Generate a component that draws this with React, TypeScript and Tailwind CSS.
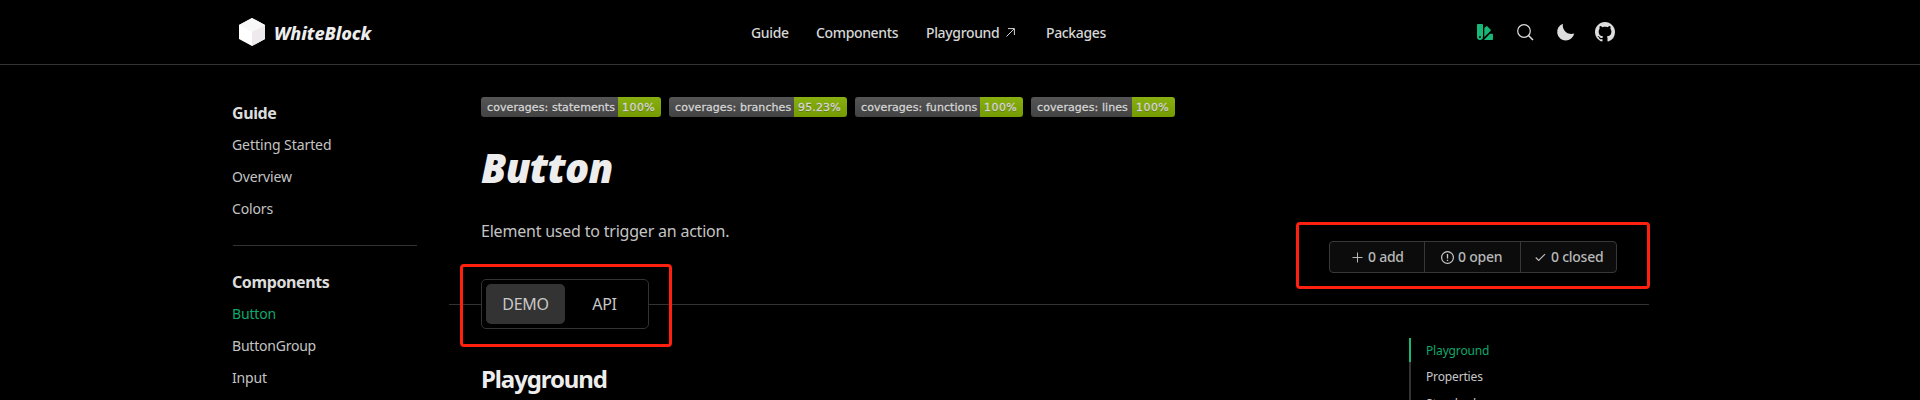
import React from "react";

const badges = [
  { label: "coverages: statements", value: "100%", left: "w-[137px]", right: "w-[43px] tracking-[0.450px]" },
  { label: "coverages: branches", value: "95.23%", left: "w-[125px]", right: "w-[53px] tracking-[0.150px]" },
  { label: "coverages: functions", value: "100%", left: "w-[125px]", right: "w-[43px] tracking-[0.450px]" },
  { label: "coverages: lines", value: "100%", left: "w-[101px]", right: "w-[43px] tracking-[0.450px]" },
];

function Header() {
  return (
    <header className="flex h-[65px] shrink-0 items-center border-b border-[#333] pl-[239px] text-[14px] font-medium tracking-[-0.350px] text-[#d6d6d6]">
      <svg width="26" height="28" viewBox="0 0 26 28" className="shrink-0">
        <path d="M13 0 26 7v14l-13 7L0 21V7z" fill="#fff" />
        <path d="M13 0 26 7 13 14 0 7z" fill="#f9f8f9" />
        <path d="M13 14 26 7v14l-13 7z" fill="#ede9ed" />
      </svg>
      <span className="mt-[2px] ml-[9px] w-[98px] text-[18px] font-extrabold tracking-[-0.100px] text-[#ededed] italic">WhiteBlock</span>
      <nav className="ml-[379px] flex items-center">
        <a className="w-[65px]">Guide</a>
        <a className="w-[110px]">Components</a>
        <a className="flex w-[120px] items-center">
          <span className="w-[80px]">Playground</span>
          <svg width="9" height="9" viewBox="0 0 9 9" fill="none" stroke="#d6d6d6">
            <path d="M.5 8.500 8.200.8M2 .6h6.400V7" />
          </svg>
        </a>
        <a className="w-[61px]">Packages</a>
      </nav>
      <div className="ml-[370px] flex items-center">
        <svg width="16" height="16" viewBox="0 0 16 16" fill="#17b877">
          <path fillRule="evenodd" d="M1 0h4a1 1 0 0 1 1 1v12a3 3 0 0 1-6 0V1a1 1 0 0 1 1-1zM3 12.100a1 1 0 1 0 0 2 1 1 0 0 0 0-2z" />
          <path d="M7.300 4 9 2.500a1 1 0 0 1 1.500 0l3 3a1 1 0 0 1 0 1.500L7.300 13z" />
          <path d="M13 9.700h2a1 1 0 0 1 1 1V15a1 1 0 0 1-1 1H6.900z" />
        </svg>
        <svg className="ml-[24px]" width="17" height="17" viewBox="0 0 17 17" fill="none" stroke="#dedede">
          <circle cx="7" cy="7" r="6.300" strokeWidth="1.200" />
          <path d="m11.500 11.500 4.500 4.500" strokeWidth="1.500" />
        </svg>
        <svg className="ml-[22px]" width="20" height="20" viewBox="0 0 20 20" fill="#dedede">
          <path d="M6.900 1.800a8.600 8.600 0 0 0 11.300 9.700A8.600 8.600 0 1 1 6.900 1.800z" />
        </svg>
        <svg className="ml-[19px]" width="20" height="20" viewBox="0 0 16 16" fill="#dedede">
          <path d="M8 0C3.580 0 0 3.580 0 8c0 3.540 2.290 6.530 5.470 7.590.4.070.55-.17.55-.38 0-.19-.01-.82-.01-1.490-2.010.37-2.530-.49-2.690-.94-.09-.23-.48-.94-.82-1.130-.28-.15-.68-.52-.01-.53.63-.01 1.080.58 1.230.82.72 1.210 1.870.87 2.330.66.070-.52.28-.87.51-1.070-1.780-.2-3.640-.89-3.640-3.950 0-.87.31-1.590.82-2.150-.08-.2-.36-1.020.08-2.120 0 0 .67-.21 2.200.82.64-.18 1.320-.27 2-.27s1.360.09 2 .27c1.530-1.040 2.200-.82 2.200-.82.44 1.100.16 1.920.08 2.120.51.56.82 1.270.82 2.150 0 3.070-1.870 3.750-3.650 3.950.29.25.54.73.54 1.480 0 1.070-.01 1.930-.01 2.200 0 .21.15.46.55.38A8.010 8.010 0 0 0 16 8c0-4.420-3.580-8-8-8z" />
        </svg>
      </div>
    </header>
  );
}

function Sidebar() {
  return (
    <aside className="ml-[232px] w-[185px] shrink-0 pt-[32px] text-[14px] tracking-[-0.150px] text-[#c4c4c4]">
      <h4 className="h-8 text-[16px] leading-8 font-bold tracking-[-0.400px] text-[#dcdcdc]">Guide</h4>
      <a className="block h-8 leading-8 tracking-[-0.080px]">Getting Started</a>
      <a className="block h-8 leading-8">Overview</a>
      <a className="block h-8 leading-8">Colors</a>
      <hr className="mt-[20px] mb-[20px] ml-px border-[#333]" />
      <h4 className="h-8 text-[16px] leading-8 font-bold tracking-[-0.400px] text-[#dcdcdc]">Components</h4>
      <a className="block h-8 leading-8 text-[#10a86b]">Button</a>
      <a className="block h-8 leading-8 tracking-[-0.220px]">ButtonGroup</a>
      <a className="block h-8 leading-8">Input</a>
    </aside>
  );
}

function IssueGroup() {
  return (
    <div className="flex h-8 w-[288px] divide-x divide-[#383838] rounded border border-[#383838] bg-[#0c0c0c] text-[14px] leading-[30px] font-medium tracking-[-0.250px] text-[#b8b8b8]">
      <span className="flex w-[95px] items-center pl-[22px]">
        <svg width="11" height="11" viewBox="0 0 11 11" fill="none" stroke="#b8b8b8"><path d="M5.500.5v10M.5 5.500h10" /></svg>
        <span className="ml-[5px]">0 add</span>
      </span>
      <span className="flex w-[96px] items-center pl-[16px]">
        <svg width="13" height="13" viewBox="0 0 13 13" fill="none" stroke="#c8c8c8"><circle cx="6.500" cy="6.500" r="5.900" strokeWidth="1.200" /><path d="M6.500 3v4.500M6.500 8.700v1.200" strokeWidth="1.300" /></svg>
        <span className="ml-[4px]">0 open</span>
      </span>
      <span className="flex flex-1 items-center pl-[14px]">
        <svg width="11" height="9" viewBox="0 0 12 9" fill="none" stroke="#c0c0c0" strokeWidth="1.200"><path d="m.8 4.500 3.200 3.200L11 .7" /></svg>
        <span className="ml-[5px]">0 closed</span>
      </span>
    </div>
  );
}

export default function App() {
  return (
    <div className="relative flex h-[400px] w-[1920px] flex-col overflow-hidden bg-black font-['Noto_Sans',sans-serif]">
      <Header />
      <div className="flex min-h-0 flex-1">
        <Sidebar />
        <main className="ml-[32px] flex w-[1200px] shrink-0 flex-col">
          <div className="mt-8 ml-8 flex gap-2 font-['DejaVu_Sans',sans-serif] text-[11px] leading-[21px] tracking-[0.080px] text-[#d5d5d5] [-webkit-text-stroke:0.3px_#d5d5d5] [text-shadow:0_1px_0_#2226]">
            {badges.map((b) => (
              <div key={b.label} className="flex h-5 overflow-hidden rounded-[3px] whitespace-nowrap">
                <span className={b.left + " bg-linear-to-b from-[#555] to-[#434343] pl-[6px]"}>{b.label}</span>
                <span className={b.right + " bg-linear-to-b from-[#88b010] to-[#749b00] pl-[4px]"}>{b.value}</span>
              </div>
            ))}
          </div>
          <h1 className="mt-[26px] ml-8 h-[50px] text-[40px] leading-[50px] font-black tracking-[-0.700px] text-[#ededed] italic">Button</h1>
          <div className="flex h-[80px] justify-between pr-[32px] pl-8">
            <p className="mt-[26px] text-[16px] leading-[24px] tracking-[-0.210px] text-[#c4c4c4]">Element used to trigger an action.</p>
            <div className="mt-[48px]"><IssueGroup /></div>
          </div>
          <div className="mt-[6px] flex items-center">
            <div className="h-px w-8 bg-[#333]" />
            <div className="flex h-[50px] w-[168px] rounded-[5px] border border-[#333] p-[4px] text-center text-[16px] leading-10 tracking-[-0.250px] text-[#c8c8c8]">
              <span className="w-[79px] rounded-[5px] bg-[#333]">DEMO</span>
              <span className="w-[79px]">API</span>
            </div>
            <div className="h-px flex-1 bg-[#333]" />
          </div>
          <div className="flex flex-1">
            <h2 className="mt-[32px] ml-8 text-[24px] leading-9 font-bold tracking-[-1.100px] text-[#ededed]">Playground</h2>
            <ul className="mt-[9px] ml-auto h-[80px] w-[240px] text-[12px] leading-[26px] tracking-[-0.150px] text-[#c8c8c8]">
              <li className="flex"><span className="h-[26px] w-[2px] bg-[#333]"><span className="block h-6 bg-[#17b877]" /></span><a className="pl-[15px] text-[#10a86b]">Playground</a></li>
              <li className="border-l-2 border-[#333] pl-[15px]">Properties</li>
              <li className="border-l-2 border-[#333] pt-px pl-[15px]">Standard</li>
            </ul>
          </div>
        </main>
      </div>
      <div className="absolute top-[264px] left-[460px] h-[83px] w-[212px] rounded border-3 border-[#ff2010]" />
      <div className="absolute top-[222px] left-[1296px] h-[67px] w-[354px] rounded border-3 border-[#ff2010]" />
    </div>
  );
}
